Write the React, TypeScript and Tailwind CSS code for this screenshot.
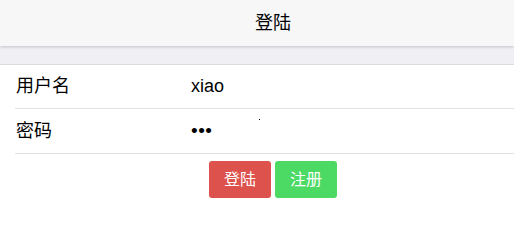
import React from "react";

export default function App() {
  const font = { fontFamily: '"Liberation Sans", "Noto Sans CJK SC", sans-serif' };
  return (
    <div className="w-[514px] h-[203px] overflow-hidden bg-white text-black" style={font}>
      <div className="relative z-10 h-[46px] bg-[#f7f7f7] shadow-[0_1px_3px_rgba(0,0,0,0.18)] flex items-center justify-center pl-[32px] text-[18px]">
        登陆
      </div>
      <div className="h-[18px] bg-[#efeff4]" />
      <div className="border-t border-[#dcdce0] bg-white">
        <div className="h-[43px] flex items-center text-[18px]">
          <span className="w-[191px] pl-[16px]">用户名</span>
          <span>xiao</span>
        </div>
        <div className="ml-[15px] h-px bg-[#e2e2e2]" />
        <div className="relative h-[44px] flex items-center text-[18px]">
          <span className="w-[191px] pl-[16px]">密码</span>
          <span className="text-[19px] tracking-[0.5px] mt-[1px]">•••</span>
          <span className="absolute left-[259px] top-[10px] w-px h-px bg-black" />
        </div>
        <div className="ml-[15px] h-px bg-[#e2e2e2]" />
        <div className="mt-[7px] flex justify-center gap-[4px] pl-[32px]">
          <button className="w-[62px] h-[37px] rounded-[3px] bg-[#dd524d] text-white text-[16px]">登陆</button>
          <button className="w-[62px] h-[37px] rounded-[3px] bg-[#4cd964] text-white text-[16px]">注册</button>
        </div>
      </div>
    </div>
  );
}
